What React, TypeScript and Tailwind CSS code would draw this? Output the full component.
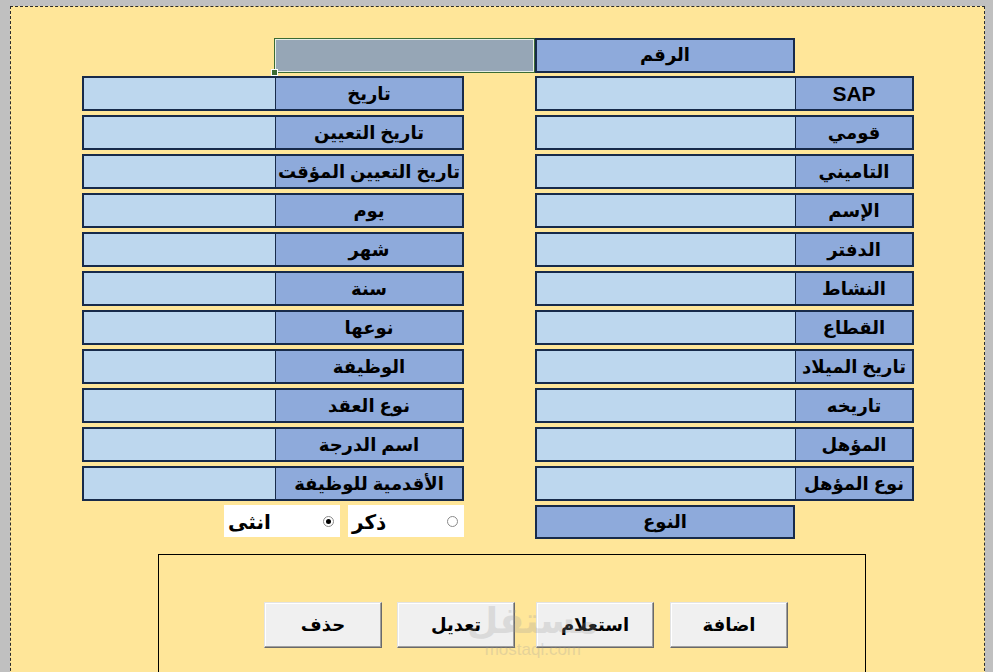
import React from 'react';

type Row = { label: string; latin?: boolean };

const leftRows: Row[] = [
  { label: 'تاريخ' },
  { label: 'تاريخ التعيين' },
  { label: 'تاريخ التعيين المؤقت' },
  { label: 'يوم' },
  { label: 'شهر' },
  { label: 'سنة' },
  { label: 'نوعها' },
  { label: 'الوظيفة' },
  { label: 'نوع العقد' },
  { label: 'اسم الدرجة' },
  { label: 'الأقدمية للوظيفة' },
];

const rightRows: Row[] = [
  { label: 'SAP', latin: true },
  { label: 'قومي' },
  { label: 'التاميني' },
  { label: 'الإسم' },
  { label: 'الدفتر' },
  { label: 'النشاط' },
  { label: 'القطاع' },
  { label: 'تاريخ الميلاد' },
  { label: 'تاريخه' },
  { label: 'المؤهل' },
  { label: 'نوع المؤهل' },
];

function FieldRow({ row, inputW }: { row: Row; inputW: string }) {
  return (
    <div className="flex h-[35px] border-2 border-[#172a4a]">
      <div className={`${inputW} h-full bg-[#bdd7ee] border-r border-[#172a4a]`} />
      <div
        className={`flex-1 h-full bg-[#8eaadb] flex items-center justify-center text-black font-bold pt-[1px] ${
          row.latin ? 'text-[21px]' : 'text-[18px]'
        }`}
        dir="rtl"
      >
        {row.label}
      </div>
    </div>
  );
}

function Radio({ label, checked }: { label: string; checked?: boolean }) {
  return (
    <div className="w-[116px] h-[32px] bg-white flex items-center justify-between px-[4px]">
      <span className="text-[20px] font-bold text-black leading-none pt-[2px]">{label}</span>
      <span className="w-[11px] h-[11px] rounded-full border border-[#8a8a8a] bg-white flex items-center justify-center mr-[2px]">
        {checked && <span className="w-[5px] h-[5px] rounded-full bg-black" />}
      </span>
    </div>
  );
}

function Btn({ label }: { label: string }) {
  return (
    <button className="w-[118px] h-[46px] bg-[#f0f0f0] border border-t-[#e3e3e3] border-l-[#e3e3e3] border-r-[#696969] border-b-[#696969] shadow-[inset_-1px_-1px_0_#a0a0a0,inset_1px_1px_0_#ffffff] text-[18px] font-bold text-black">
      {label}
    </button>
  );
}

export default function App() {
  return (
    <div className="w-[993px] h-[672px] overflow-hidden bg-[#c0c0c0] pl-[10px] pt-[6px] pr-[8px] font-['Liberation_Sans','DejaVu_Sans',sans-serif]">
      <div className="relative h-[700px] bg-[#ffe699] border border-dashed border-[#2b2b2b] pl-[71px] pt-[31px]">
        {/* top row: number */}
        <div className="flex h-[35px]">
          <div className="w-[192px]" />
          <div className="relative w-[261px] h-full bg-[#96a6b6] border border-[#3b6b34] shadow-[inset_0_0_0_1px_#e8efe4]">
            <span className="absolute -left-[4px] -bottom-[4px] w-[7px] h-[7px] bg-[#3b6b34] border border-white" />
          </div>
          <div className="w-[260px] h-full bg-[#8eaadb] border-2 border-[#172a4a] flex items-center justify-center text-[18px] font-bold text-black" dir="rtl">
            الرقم
          </div>
        </div>

        {/* field rows */}
        <div className="flex mt-[3px] gap-[71px]">
          <div className="flex flex-col gap-[4px] w-[382px]">
            {leftRows.map((r, i) => (
              <FieldRow key={i} row={r} inputW="w-[192px]" />
            ))}
          </div>
          <div className="flex flex-col gap-[4px] w-[379px]">
            {rightRows.map((r, i) => (
              <FieldRow key={i} row={r} inputW="w-[259px]" />
            ))}
          </div>
        </div>

        {/* gender row */}
        <div className="flex mt-[4px] h-[34px]">
          <div className="w-[382px] flex justify-end gap-[8px]">
            <Radio label="انثى" checked />
            <Radio label="ذكر" />
          </div>
          <div className="ml-[71px] w-[260px] h-full bg-[#8eaadb] border-2 border-[#172a4a] flex items-center justify-center text-[18px] font-bold text-black" dir="rtl">
            النوع
          </div>
        </div>

        {/* actions frame */}
        <div className="relative ml-[76px] mt-[15px] w-[708px] h-[200px] border border-black pt-[47px] pl-[105px]">
          <div className="flex">
            <Btn label="حذف" />
            <div className="w-[15px]" />
            <Btn label="تعديل" />
            <div className="w-[21px]" />
            <Btn label="استعلام" />
            <div className="w-[16px]" />
            <Btn label="اضافة" />
          </div>
          {/* watermark */}
          <div className="absolute left-[308px] top-[48px] flex flex-col items-center pointer-events-none text-[#9a9a9a] opacity-25">
            <span className="text-[36px] font-bold leading-none">مستقل</span>
            <span className="text-[17px] leading-none mt-[2px]">mostaql.com</span>
          </div>
        </div>
      </div>
    </div>
  );
}
